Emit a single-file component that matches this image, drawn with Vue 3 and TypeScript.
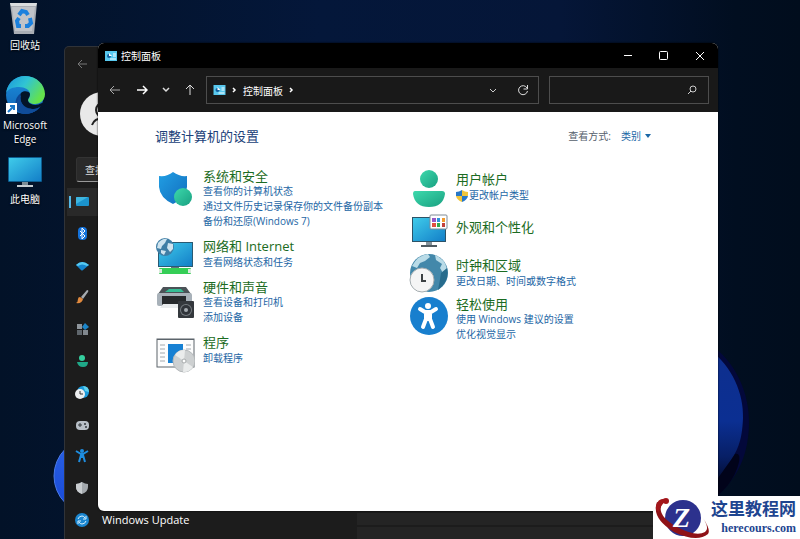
<script setup lang="ts">
interface Category {
  icon: string
  title: string
  links: string[]
  shield?: boolean
}

const leftCategories: Category[] = [
  { icon: 'security', title: '系统和安全', links: ['查看你的计算机状态', '通过文件历史记录保存你的文件备份副本', '备份和还原(Windows 7)'] },
  { icon: 'network', title: '网络和 Internet', links: ['查看网络状态和任务'] },
  { icon: 'hardware', title: '硬件和声音', links: ['查看设备和打印机', '添加设备'] },
  { icon: 'programs', title: '程序', links: ['卸载程序'] },
]

const rightCategories: Category[] = [
  { icon: 'user', title: '用户帐户', links: ['更改帐户类型'], shield: true },
  { icon: 'appearance', title: '外观和个性化', links: [] },
  { icon: 'clock', title: '时钟和区域', links: ['更改日期、时间或数字格式'] },
  { icon: 'ease', title: '轻松使用', links: ['使用 Windows 建议的设置', '优化视觉显示'] },
]

const columns = [
  { name: 'left', items: leftCategories },
  { name: 'right', items: rightCategories },
]

const navItems = ['system', 'bluetooth', 'wifi', 'brush', 'apps', 'account', 'time', 'gaming', 'access', 'privacy', 'update']
</script>

<template>
  <div class="desktop">
    <svg class="wallpaper" viewBox="0 0 800 539" preserveAspectRatio="xMidYMid slice" aria-hidden="true">
      <defs>
        <linearGradient id="sky" x1="0" y1="0" x2="1" y2="0">
          <stop offset="0" stop-color="#021228" />
          <stop offset=".4" stop-color="#04173a" />
          <stop offset=".7" stop-color="#051638" />
          <stop offset=".92" stop-color="#010e20" />
          <stop offset="1" stop-color="#010d1d" />
        </linearGradient>
        <linearGradient id="petal" x1="0" y1="0" x2="0" y2="1">
          <stop offset="0" stop-color="#0e2f8e" />
          <stop offset=".5" stop-color="#0b2f92" />
          <stop offset=".75" stop-color="#071f66" />
          <stop offset="1" stop-color="#01041a" />
        </linearGradient>
        <linearGradient id="petal2" x1="0" y1="0" x2="0" y2="1">
          <stop offset="0" stop-color="#2b62e4" />
          <stop offset="1" stop-color="#1748d8" />
        </linearGradient>
      </defs>
      <rect width="800" height="539" fill="url(#sky)" />
      <path d="M710 344C736 362 750 394 749 425C748 460 735 482 708 505Z" fill="#03083a" />
      <path d="M710 470C735 450 741 450 739 462C735 480 722 494 708 503Z" fill="#01031a" />
      <path d="M710 350C732 366 744 394 743 418C742 442 737 452 728 464L708 492Z" fill="url(#petal)" />
      <circle cx="92" cy="476" r="38" fill="url(#petal2)" stroke="#4b7be8" stroke-width="1" />
    </svg>

    <nav class="shortcuts">
      <a class="shortcut" href="#">
        <svg width="40" height="36" viewBox="0 0 40 36">
          <path d="M5 3h27l-3 31H9z" fill="#a9adb3" />
          <path d="M5 3h27l-1 3H6z" fill="#dadddf" />
          <path d="M7 7h23l-3 24H10z" fill="#c0c3c8" />
          <g fill="none" stroke="#1b80dd" stroke-width="4">
            <path d="M14 15l3-4 4 1 2 3" />
            <path d="M25 18l1 5-3 3h-3" />
            <path d="M16 26h-3l-1-5 2-3" />
          </g>
        </svg>
        <span>回收站</span>
      </a>
      <a class="shortcut edge" href="#">
        <svg width="42" height="42" viewBox="0 0 42 42">
          <defs>
            <linearGradient id="e1" x1="0" y1="0" x2="1" y2=".5">
              <stop offset="0" stop-color="#1a94dc" />
              <stop offset=".5" stop-color="#30c4d4" />
              <stop offset="1" stop-color="#64e24c" />
            </linearGradient>
            <linearGradient id="e2" x1="0" y1="0" x2="0" y2="1">
              <stop offset="0" stop-color="#1c8fdc" />
              <stop offset="1" stop-color="#1163b5" />
            </linearGradient>
          </defs>
          <circle cx="21" cy="21" r="19" fill="url(#e2)" />
          <path d="M2 19C4 7 13 2 21 2C33 2 41 11 41 20C41 27 35 30 31 30C27 30 24 28 24 26C24 25 26 24 26 20C26 16 21 13 15 13C9 13 4 15 2 19Z" fill="url(#e1)" />
          <path d="M13 36C10 31 11 23 17 19C18 28 25 36 36 33C31 39 20 43 13 36Z" fill="#0c4794" />
          <path d="M17 19C19 16 26 17 26 20C26 23 24 24 24 26C24 30 31 33 38 29C39 30 38 31 37 32C29 39 13 33 17 19Z" fill="#031428" />
          <path d="M17 21C14 32 26 39 36 33C31 39 25 40 21 40C12 40 10 28 17 21Z" fill="#104c99" />
          <rect x="2" y="29" width="11" height="11" fill="#fff" />
          <path d="M4 38l5-5M6 32h4v4" fill="none" stroke="#1976c8" stroke-width="2" />
        </svg>
        <span>Microsoft<br />Edge</span>
      </a>
      <a class="shortcut pc" href="#">
        <svg width="36" height="34" viewBox="0 0 36 34">
          <defs>
            <linearGradient id="scr" x1="0" y1="0" x2="1" y2="1">
              <stop offset="0" stop-color="#3fcbea" />
              <stop offset="1" stop-color="#137fc8" />
            </linearGradient>
          </defs>
          <rect x="1" y="1" width="34" height="25" rx="1" fill="#0d5d8f" />
          <rect x="2" y="2" width="32" height="23" fill="url(#scr)" />
          <path d="M15 26h6v3h-6z" fill="#7d8c96" />
          <path d="M10 29h16v2H10z" fill="#c6cdd2" />
        </svg>
        <span>此电脑</span>
      </a>
    </nav>

    <section class="settings">
      <aside class="side">
        <button class="side-back" type="button" aria-label="返回">
          <svg width="12" height="10" viewBox="0 0 12 10"><path d="M11 5H2M6 1L2 5l4 4" fill="none" stroke="#777" /></svg>
        </button>
        <div class="avatar">
          <svg width="45" height="45" viewBox="0 0 45 45">
            <circle cx="22" cy="22" r="22" fill="#e9e9e9" />
            <circle cx="23" cy="18" r="7" fill="none" stroke="#222" stroke-width="2" />
            <path d="M12 33c3-9 19-9 22 0" fill="none" stroke="#222" stroke-width="2" />
          </svg>
        </div>
        <input class="side-search" type="text" placeholder="查找设置" aria-label="查找设置" />
        <ul class="side-list">
          <li v-for="item in navItems" :key="item" :class="{ active: item === 'system' }">
            <a href="#" :aria-label="item">
              <svg width="16" height="16" viewBox="0 0 16 16">
                <template v-if="item === 'system'">
                  <rect x="2" y="3" width="13" height="9" rx="1" fill="#1b93cc" />
                  <path d="M2 4q0-1 1-1h11L2 10z" fill="#3eb6e0" />
                </template>
                <template v-else-if="item === 'bluetooth'">
                  <rect x="4" y="1" width="9" height="13" rx="4" fill="#1473dc" />
                  <path d="M6 5l5 5-3 3V2l3 3-5 5" fill="none" stroke="#fff" />
                </template>
                <template v-else-if="item === 'wifi'">
                  <path d="M2 7Q8 1 15 7L9 12Q8 13 7 12z" fill="#1585cd" />
                  <path d="M2 7Q8 1 15 7L13 8Q8 5 4 8z" fill="#56c9f0" />
                </template>
                <template v-else-if="item === 'brush'">
                  <path d="M13 1q2 0 1 2L9 10 7 8z" fill="#a6abb0" />
                  <path d="M6 8l3 2q-1 5-7 4 2-1 2-4 0-2 2-2z" fill="#e18a3e" />
                </template>
                <template v-else-if="item === 'apps'">
                  <path d="M3 3h5v5H3z" fill="#8e959b" />
                  <path d="M3 9h5v5H3z" fill="#5f666c" />
                  <path d="M9 9h5v5H9z" fill="#81888e" />
                  <path d="M11 2l4 4-4 3-3-3z" fill="#1c85c8" />
                </template>
                <template v-else-if="item === 'account'">
                  <circle cx="8" cy="5" r="3" fill="#35cf9e" />
                  <path d="M3 9h11q0 5-5 5T3 9z" fill="#1fa888" />
                </template>
                <template v-else-if="item === 'time'">
                  <circle cx="9" cy="7" r="6" fill="#1c9bdc" />
                  <path d="M9 1q6 0 6 6l-4-1-1-3z" fill="#5dd1ef" />
                  <circle cx="6" cy="9" r="5" fill="#eceeef" />
                  <path d="M6 6v3h3" fill="none" stroke="#333" />
                </template>
                <template v-else-if="item === 'gaming'">
                  <rect x="2" y="4" width="13" height="9" rx="4" fill="#b8bfc7" />
                  <path d="M4 8h4M6 6v4" stroke="#30363b" />
                  <circle cx="11" cy="7" r="1" fill="#30363b" />
                  <circle cx="12" cy="10" r="1" fill="#30363b" />
                </template>
                <template v-else-if="item === 'access'">
                  <circle cx="8" cy="3" r="2" fill="#1e8ddf" />
                  <path d="M2 3l5 3h2l5-3M8 6v4M7 7l-2 7M9 7l2 7" fill="none" stroke="#1e8ddf" stroke-width="2" />
                </template>
                <template v-else-if="item === 'privacy'">
                  <path d="M8 2q3 2 6 2v3q0 5-6 7-6-2-6-7V4q3 0 6-2z" fill="#a3a8ad" />
                  <path d="M8 2v12Q2 12 2 7V4q3 0 6-2z" fill="#c9cdd0" />
                </template>
                <template v-else>
                  <circle cx="8" cy="8" r="7" fill="#1a86d0" />
                  <path d="M4 7q1-3 4-3 2 0 3 2M12 9q-1 3-4 3-2 0-3-2M12 4v3H9M4 12V9h3" fill="none" stroke="#d8f0fc" />
                </template>
              </svg>
              <span v-if="item === 'update'">Windows Update</span>
            </a>
          </li>
        </ul>
      </aside>
      <div class="pane">
        <div class="card"></div>
        <div class="card"></div>
      </div>
    </section>

    <main class="window">
      <header class="titlebar">
        <svg width="12" height="10" viewBox="0 0 12 10">
          <rect width="12" height="10" fill="#58c8ee" />
          <circle cx="4" cy="5" r="2" fill="#135f9e" /><path d="M4 5V2l3 3z" fill="#fff" />
          <path d="M8 3h3M8 5h3M5 8h6" stroke="#fff" />
        </svg>
        <h1>控制面板</h1>
        <div class="controls">
          <button type="button" aria-label="最小化"><svg width="12" height="12" viewBox="0 0 12 12"><path d="M2 5.500h8" stroke="#fff" /></svg></button>
          <button type="button" aria-label="最大化"><svg width="12" height="12" viewBox="0 0 12 12"><rect x="1.500" y="1.500" width="8" height="8" rx="1" fill="none" stroke="#fff" /></svg></button>
          <button type="button" aria-label="关闭"><svg width="12" height="12" viewBox="0 0 12 12"><path d="M2 2l8 8M10 2l-8 8" stroke="#fff" /></svg></button>
        </div>
      </header>

      <div class="toolbar">
        <div class="arrows">
          <button type="button" aria-label="后退"><svg width="12" height="12" viewBox="0 0 12 12"><path d="M11 6H1M5 2L1 6l4 4" fill="none" stroke="#aaa" /></svg></button>
          <button type="button" aria-label="前进"><svg width="12" height="12" viewBox="0 0 12 12"><path d="M1 6h10M7 2l4 4-4 4" fill="none" stroke="#fff" stroke-width="1.500" /></svg></button>
          <button class="narrow" type="button" aria-label="最近"><svg width="8" height="8" viewBox="0 0 8 8"><path d="M1 2l3 3 3-3" fill="none" stroke="#ddd" stroke-width="1.500" /></svg></button>
          <button type="button" aria-label="向上"><svg width="12" height="12" viewBox="0 0 12 12"><path d="M6 11V1M2 5l4-4 4 4" fill="none" stroke="#ddd" /></svg></button>
        </div>
        <div class="address">
          <svg width="13" height="10" viewBox="0 0 12 10">
            <rect width="12" height="10" fill="#58c8ee" />
            <circle cx="4" cy="5" r="2" fill="#135f9e" /><path d="M4 5V2l3 3z" fill="#fff" />
            <path d="M8 3h3M8 5h3M5 8h6" stroke="#fff" />
          </svg>
          <svg width="5" height="8" viewBox="0 0 5 8"><path d="M1 2l2 2-2 2" fill="none" stroke="#fff" stroke-width="1.500" /></svg>
          <button class="crumb" type="button">控制面板</button>
          <svg width="5" height="8" viewBox="0 0 5 8"><path d="M1 2l2 2-2 2" fill="none" stroke="#fff" stroke-width="1.500" /></svg>
          <div class="address-end">
            <button type="button" aria-label="历史"><svg width="8" height="8" viewBox="0 0 8 8"><path d="M1 3l3 3 3-3" fill="none" stroke="#ccc" /></svg></button>
            <button type="button" aria-label="刷新"><svg width="12" height="12" viewBox="0 0 12 12"><path d="M10 4A4.500 4.500 0 1 0 10.500 7M10.500 1v4h-4" fill="none" stroke="#ddd" /></svg></button>
          </div>
        </div>
        <label class="search">
          <input type="text" aria-label="搜索" />
          <svg width="10" height="10" viewBox="0 0 10 10"><circle cx="6" cy="4" r="3" fill="none" stroke="#ccc" /><path d="M4 6L1 9" stroke="#ccc" /></svg>
        </label>
      </div>

      <div class="content">
        <div class="heading">
          <h2>调整计算机的设置</h2>
          <label for="view">查看方式:</label>
          <div class="view">
            <select id="view"><option>类别</option></select>
            <svg width="6" height="4" viewBox="0 0 6 4"><path d="M0 0h6L3 4z" fill="#1b67a6" /></svg>
          </div>
        </div>

        <div class="columns">
          <div v-for="col in columns" :key="col.name" class="column" :class="col.name">
            <section v-for="cat in col.items" :key="cat.title" class="category" :class="{ single: cat.links.length === 1, bare: cat.links.length === 0 }">
              <svg class="icon" width="40" height="40" viewBox="0 0 40 40">
                <template v-if="cat.icon === 'security'">
                  <defs>
                    <linearGradient id="sh" x1="0" y1="0" x2="1" y2="1"><stop offset="0" stop-color="#219fe4" /><stop offset="1" stop-color="#126dbd" /></linearGradient>
                    <linearGradient id="gr" x1="0" y1="0" x2="1" y2="1"><stop offset="0" stop-color="#3dd9ac" /><stop offset="1" stop-color="#19a081" /></linearGradient>
                  </defs>
                  <path d="M18 4Q25 9 32 8V19Q31 30 18 36Q5 30 4 19V8Q12 9 18 4Z" fill="url(#sh)" />
                  <circle cx="28" cy="29" r="9" fill="url(#gr)" />
                </template>
                <template v-else-if="cat.icon === 'network'">
                  <rect x="3" y="4" width="35" height="25" fill="#295a72" />
                  <rect x="4" y="5" width="33" height="23" fill="url(#scr)" />
                  <path d="M16 29h8v2h-8z" fill="#63737c" />
                  <rect x="4" y="30" width="32" height="6" rx="1" fill="#35ce56" />
                  <path d="M4 31h3v4H4zM33 31h3v4h-3z" fill="#dbeadd" />
                  <circle cx="10" cy="9" r="9" fill="#3f7ea5" />
                  <path d="M3 5q5-5 9-4l-2 4-3 3-1 3-4-1zM13 5l5 1v5l-3 3-3-4zM6 12l5 1-2 4-3-2z" fill="#cfe4ef" />
                </template>
                <template v-else-if="cat.icon === 'hardware'">
                  <path d="M8 8h23l5 7H3z" fill="#4b5257" />
                  <path d="M14 10h12l3 3H10z" fill="#35bd95" />
                  <rect x="2" y="14" width="35" height="13" rx="2" fill="#a8b1b9" />
                  <rect x="7" y="17" width="24" height="10" fill="#26292c" />
                  <path d="M8 25h21l3 4H5z" fill="#e8ebed" />
                  <rect x="23" y="22" width="16" height="17" rx="1" fill="#34383d" />
                  <circle cx="31" cy="31" r="6" fill="#777d82" />
                  <circle cx="31" cy="31" r="5" fill="#30343a" />
                  <circle cx="31" cy="31" r="2" fill="#a5abb0" />
                </template>
                <template v-else-if="cat.icon === 'programs'">
                  <rect x="2" y="5" width="37" height="28" fill="#fdfdfd" stroke="#5c646b" />
                  <path d="M2 5h37v1H2z" fill="#5c646b" />
                  <path d="M5 11h5M5 15h5M5 19h5M5 23h5M5 27h5M31 11h5M31 15h5" stroke="#a2a8ad" />
                  <rect x="13" y="10" width="15" height="19" fill="#1680d3" />
                  <circle cx="29" cy="27" r="11" fill="#cdd0d1" stroke="#b4b8ba" />
                  <path d="M29 27L20 21A11 11 0 0 1 30 16zM29 27l9 6a11 11 0 0 1-10 5z" fill="#eaecec" />
                  <circle cx="29" cy="27" r="2" fill="#fff" stroke="#a5a9aa" />
                </template>
                <template v-else-if="cat.icon === 'user'">
                  <circle cx="21" cy="12" r="9" fill="url(#gr)" />
                  <path d="M7 24h27q3 0 3 3-2 13-16 13T5 27q0-3 2-3z" fill="url(#gr)" />
                </template>
                <template v-else-if="cat.icon === 'appearance'">
                  <rect x="4" y="7" width="34" height="25" fill="#2d5367" />
                  <rect x="5" y="8" width="32" height="23" fill="url(#scr)" />
                  <path d="M18 32h6v3h-6z" fill="#87949c" />
                  <path d="M13 35h16v2H13z" fill="#4f5a61" />
                  <rect x="22" y="5" width="17" height="14" rx="1" fill="#fff" stroke="#7f8b96" />
                  <path d="M24 8h4v4h-4z" fill="#9558c6" /><path d="M29 8h3v4h-3z" fill="#2e93dd" /><path d="M34 8h3v4h-3z" fill="#f29a2c" />
                  <path d="M24 13h4v4h-4z" fill="#e34f3e" /><path d="M29 13h3v4h-3z" fill="#35a94e" /><path d="M34 13h3v4h-3z" fill="#c3403a" />
                </template>
                <template v-else-if="cat.icon === 'clock'">
                  <circle cx="21" cy="20" r="19" fill="#4388aa" />
                  <path d="M4 13Q10 2 20 1l2 3-5 4-5 2-3 5zM27 2q10 4 12 14l-4 4-3-5 2-4-6-4z" fill="#b9dbe7" />
                  <path d="M39 15q3 13-9 22 2-10 3-17z" fill="#276b8c" />
                  <circle cx="14" cy="27" r="12" fill="#f5f5f5" stroke="#a5adb0" />
                  <path d="M14 21v7h4" fill="none" stroke="#3c4143" stroke-width="2" />
                </template>
                <template v-else>
                  <circle cx="21" cy="20" r="19" fill="#187fce" />
                  <circle cx="20" cy="10" r="3" fill="#fff" />
                  <path d="M12 13l5 3h6l5-3M20 17v6M18 18v5l-3 8M22 18v5l3 8" fill="none" stroke="#fff" stroke-width="4" stroke-linecap="round" stroke-linejoin="round" />
                </template>
              </svg>
              <div class="text">
                <h3><a href="#">{{ cat.title }}</a></h3>
                <a v-for="link in cat.links" :key="link" class="link" href="#">
                  <svg v-if="cat.shield" width="12" height="12" viewBox="0 0 12 12">
                    <path d="M6 0Q3 2 0 2v4h6z" fill="#2878c8" /><path d="M6 0q3 2 6 2v4H6z" fill="#f0c53c" />
                    <path d="M0 6h6v6Q1 10 0 6z" fill="#f0c53c" /><path d="M12 6H6v6q5-2 6-6z" fill="#2878c8" />
                  </svg>{{ link }}
                </a>
              </div>
            </section>
          </div>
        </div>
      </div>
    </main>

    <footer class="watermark">
      <svg width="58" height="43" viewBox="0 0 58 43">
        <circle cx="30" cy="22" r="18" fill="#2c318d" />
        <path d="M4 6Q-2 22 21 36Q44 47 55 38Q58 34 50 22Q57 33 52 36Q43 41 24 31Q3 19 9 8Z" fill="#8e1217" />
        <path d="M3 10Q5 1 14 3L9 9Q6 12 6 16Q2 14 3 10Z" fill="#a3161b" />
        <circle cx="13" cy="5" r="3" fill="#a3161b" />
        <text x="20" y="31" class="mark">Z</text>
      </svg>
      <div class="brand">
        <strong>这里教程网</strong>
        <span>herecours.com</span>
      </div>
    </footer>
  </div>
</template>

<style>
body {
  margin: 0;
  background: #021229;
}
</style>

<style scoped>
.desktop {
  position: relative;
  min-height: 100vh;
  overflow: hidden;
  font-family: "Open Sans", "Noto Sans CJK SC", sans-serif;
  font-size: 10px;
  color: #fff;
}
* {
  box-sizing: border-box;
}
svg {
  display: block;
  flex: none;
}
a {
  color: inherit;
  text-decoration: none;
}
button {
  display: flex;
  align-items: center;
  justify-content: center;
  padding: 0;
  border: 0;
  background: none;
  color: inherit;
  font: inherit;
}
input,
select {
  font: inherit;
  color: inherit;
}
h1,
h2,
h3 {
  margin: 0;
  font-weight: 400;
}
.wallpaper {
  position: absolute;
  inset: 0;
  width: 100%;
  height: 100%;
}
.shortcuts {
  position: relative;
  width: 50px;
  display: flex;
  flex-direction: column;
}
.shortcut {
  display: flex;
  flex-direction: column;
  align-items: center;
  gap: 2px;
  line-height: 14px;
  text-align: center;
  text-shadow: 0 1px 2px #000;
}
.edge {
  margin-top: 22px;
}
.pc {
  margin-top: 10px;
}
.settings {
  position: absolute;
  inset: 46px 84px 0 64px;
  display: grid;
  grid-template-columns: 292px 1fr;
  background: #1c1c1c;
  border: 1px solid #303338;
  border-bottom: 0;
  border-radius: 5px 5px 0 0;
}
.side {
  display: flex;
  flex-direction: column;
}
.side-back {
  width: 34px;
  height: 34px;
}
.avatar {
  margin: 11px 0 20px 15px;
}
.side-search {
  height: 25px;
  margin: 0 11px 6px;
  padding: 0 8px;
  border: 1px solid #333;
  border-bottom-color: #999;
  border-radius: 3px;
  background: #2a2a2a;
}
.side-search::placeholder {
  color: #ddd;
}
.side-list {
  flex: 1;
  display: flex;
  flex-direction: column;
  justify-content: space-between;
  margin: 0;
  padding: 0 2px 5px;
  list-style: none;
}
.side-list li {
  border-left: 2px solid transparent;
}
.side-list a {
  display: flex;
  align-items: center;
  gap: 12px;
  height: 28px;
  padding-left: 5px;
  font-size: 11px;
}
.side-list .active {
  background: linear-gradient(#55b9e8, #55b9e8) 0 50% / 2px 12px no-repeat #292929;
}
.pane {
  display: flex;
  flex-direction: column;
  justify-content: flex-end;
  gap: 2px;
}
.card {
  height: 12px;
  background: #242424;
}
.window {
  position: absolute;
  inset: 43px 82px 28px 98px;
  display: flex;
  flex-direction: column;
  overflow: hidden;
  border-radius: 6px;
  background: #fff;
  box-shadow: 0 0 2px #000;
}
.titlebar {
  display: flex;
  align-items: center;
  gap: 4px;
  height: 25px;
  padding-left: 7px;
  background: #000;
}
.titlebar h1 {
  font-size: 10px;
  line-height: 16px;
}
.controls {
  display: flex;
  margin-left: auto;
}
.controls button {
  width: 36px;
  height: 25px;
}
.toolbar {
  display: flex;
  align-items: center;
  gap: 10px;
  height: 44px;
  padding: 0 9px 0 3px;
  background: #191919;
}
.arrows {
  display: flex;
}
.arrows button {
  width: 27px;
  height: 28px;
}
.arrows .narrow {
  width: 21px;
}
.address {
  flex: 1;
  display: flex;
  align-items: center;
  gap: 6px;
  height: 28px;
  margin-left: -7px;
  padding: 0 0 0 6px;
  border: 1px solid #4d4d4d;
}
.address-end {
  display: flex;
  margin-left: auto;
}
.address-end button {
  width: 30px;
  height: 26px;
}
.search {
  display: flex;
  align-items: center;
  width: 160px;
  height: 28px;
  padding-right: 11px;
  border: 1px solid #4d4d4d;
}
.search input {
  flex: 1;
  min-width: 0;
  border: 0;
  background: none;
  outline: none;
}
.content {
  padding: 15px 57px;
}
.heading {
  display: flex;
  align-items: center;
  gap: 10px;
  padding-right: 10px;
  color: #56606c;
  line-height: 18px;
}
.heading h2 {
  margin-right: auto;
  font-size: 13px;
  color: #204078;
}
.view {
  display: flex;
  align-items: center;
  gap: 4px;
  color: #1b67a6;
}
.view select {
  appearance: none;
  padding: 0;
  border: 0;
  background: none;
}
.columns {
  display: grid;
  grid-template-columns: 1fr 1fr;
  margin-top: 22px;
}
.column {
  display: flex;
  flex-direction: column;
}
.left {
  gap: 9px;
  padding-top: 1px;
}
.right {
  gap: 3px;
}
.category {
  display: flex;
  align-items: flex-start;
  gap: 8px;
}
.left .icon {
  margin-bottom: -8px;
}
.right .text {
  align-self: center;
}
.text {
  display: flex;
  flex-direction: column;
  align-items: flex-start;
  white-space: nowrap;
}
.single .text {
  gap: 1px;
}
.bare .text {
  padding-bottom: 6px;
}
.text h3 {
  font-size: 13px;
  line-height: 16px;
  color: #1b6b22;
}
.link {
  display: flex;
  align-items: center;
  gap: 1px;
  line-height: 15px;
  color: #1d66a5;
}
.watermark {
  position: absolute;
  right: 0;
  bottom: 0;
  display: flex;
  height: 43px;
  padding-right: 4px;
  background: #fff;
  color: #1e4590;
}
.mark {
  fill: #fff;
  font: italic bold 28px "Liberation Serif", serif;
}
.brand {
  display: flex;
  flex-direction: column;
  align-items: flex-end;
}
.brand strong {
  font-family: "Noto Sans CJK SC", sans-serif;
  font-size: 17px;
  line-height: 24px;
}
.brand span {
  font: bold 12px/17px "Liberation Serif", serif;
}
</style>
